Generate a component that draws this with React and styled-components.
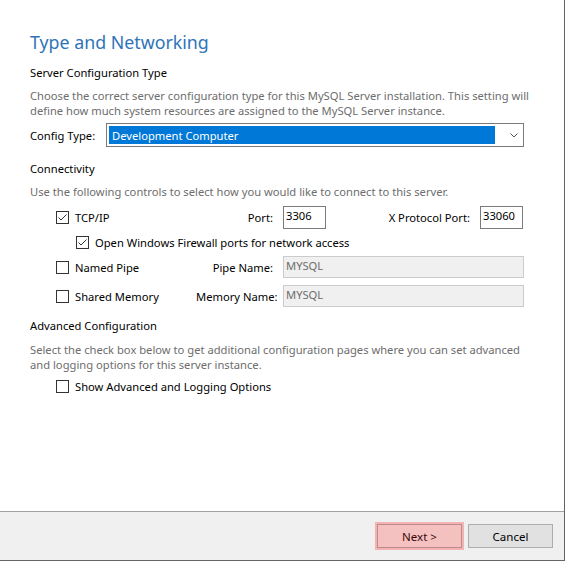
import React from "react";
import styled, { createGlobalStyle } from "styled-components";

const GlobalStyle = createGlobalStyle`
  html, body { margin: 0; padding: 0; background: #ffffff; }
  body { font-family: "Noto Sans", "Open Sans", sans-serif; font-size: 11.2px; color: #000; }
  * { box-sizing: border-box; }
`;

const Window = styled.div`
  width: 565px;
  height: 561px;
  display: flex;
  flex-direction: column;
  border-right: 1px solid #646464;
  background: #ffffff;
`;

const Content = styled.div`
  flex: 1;
  padding: 28px 40px 0 30px;
  display: flex;
  flex-direction: column;
`;

const Title = styled.h1`
  margin: 0;
  font-weight: 400;
  font-size: 17.8px;
  line-height: 28px;
  color: #2f74b8;
`;

const Heading = styled.div`
  margin-top: ${(p) => p.$mt}px;
  line-height: 16px;
  color: #000;
`;

const Description = styled.p`
  margin: ${(p) => p.$mt}px -20px 0 0;
  line-height: 15px;
  color: #6d6d6d;
  white-space: nowrap;
`;

const ConfigRow = styled.div`
  display: flex;
  align-items: center;
  margin-top: 5px;
  height: 24px;
`;

const ConfigLabel = styled.span`
  width: 76px;
`;

const Select = styled.div`
  flex: 1;
  height: 24px;
  border: 1px solid #7a7a7a;
  padding: 2px;
  display: flex;
  align-items: stretch;
  background: #fff;
`;

const SelectValue = styled.div`
  flex: 1;
  background: #0078d7;
  color: #ffffff;
  padding-left: 3px;
  display: flex;
  align-items: center;
  margin-right: 15px;
`;

const Chevron = styled.svg`
  width: 8px;
  height: 5px;
  align-self: center;
  margin-right: 3px;
`;

const OptionRow = styled.div`
  display: flex;
  align-items: center;
  height: ${(p) => p.$h}px;
  margin-top: ${(p) => p.$mt}px;
  padding-left: ${(p) => p.$indent}px;
`;

const CheckCell = styled.label`
  display: flex;
  align-items: center;
  gap: 6px;
  width: ${(p) => (p.$w ? `${p.$w}px` : "auto")};
  white-space: nowrap;
`;

const Box = styled.span`
  width: 13px;
  height: 13px;
  border: 1px solid #333333;
  background: #fff;
  display: inline-flex;
  align-items: center;
  justify-content: center;
  flex-shrink: 0;
`;

const FieldLabel = styled.span`
  width: ${(p) => p.$w}px;
  text-align: right;
  margin-right: 10px;
  white-space: nowrap;
`;

const TextInput = styled.div`
  width: ${(p) => (p.$w ? `${p.$w}px` : "auto")};
  flex: ${(p) => (p.$w ? "none" : "1")};
  height: ${(p) => p.$h}px;
  border: 1px solid ${(p) => (p.$disabled ? "#cccccc" : "#7a7a7a")};
  background: ${(p) => (p.$disabled ? "#f0f0f0" : "#ffffff")};
  color: ${(p) => (p.$disabled ? "#6d6d6d" : "#000")};
  padding: 1px 2px 0;
  line-height: 16px;
`;

const Footer = styled.div`
  height: 50px;
  border-top: 1px solid #a0a0a0;
  border-bottom: 1px solid #646464;
  background: #f0f0f0;
  display: flex;
  align-items: center;
  justify-content: flex-end;
  padding-right: 11px;
  gap: 6px;
`;

const Button = styled.button`
  width: 85px;
  height: 24px;
  font: inherit;
  font-size: 11.5px;
  color: ${(p) => (p.$focused ? "#3a0a0a" : "#000")};
  background: ${(p) => (p.$focused ? "#f4c0c0" : "#e1e1e1")};
  border: 1px solid ${(p) => (p.$focused ? "#c08a8a" : "#adadad")};
  box-shadow: ${(p) => (p.$focused ? "0 0 0 2px #f2b3b3" : "none")};
  padding: 0;
`;

const Check = ({ checked }) => (
  <Box>
    {checked && (
      <svg width="11" height="11" viewBox="0 0 11 11">
        <path d="M1.5 5.5 L4 8 L9.5 2.5" fill="none" stroke="#333" strokeWidth="1" />
      </svg>
    )}
  </Box>
);

export default function App() {
  return (
    <>
      <GlobalStyle />
      <Window>
        <Content>
          <Title>Type and Networking</Title>
          <Heading $mt={9}>Server Configuration Type</Heading>
          <Description $mt={7}>
            Choose the correct server configuration type for this MySQL Server installation. This setting will
            <br />
            define how much system resources are assigned to the MySQL Server instance.
          </Description>
          <ConfigRow>
            <ConfigLabel>Config Type:</ConfigLabel>
            <Select>
              <SelectValue>Development Computer</SelectValue>
              <Chevron viewBox="0 0 8 5">
                <path d="M0.5 0.5 L4 4 L7.5 0.5" fill="none" stroke="#555" strokeWidth="1" />
              </Chevron>
            </Select>
          </ConfigRow>
          <Heading $mt={14}>Connectivity</Heading>
          <Description $mt={7}>Use the following controls to select how you would like to connect to this server.</Description>
          <OptionRow $h={23} $mt={7} $indent={26}>
            <CheckCell $w={140}>
              <Check checked />
              TCP/IP
            </CheckCell>
            <FieldLabel $w={77}>Port:</FieldLabel>
            <TextInput $w={43} $h={23}>3306</TextInput>
            <FieldLabel $w={144}>X Protocol Port:</FieldLabel>
            <TextInput $w={43} $h={23}>33060</TextInput>
          </OptionRow>
          <OptionRow $h={18} $mt={4} $indent={46}>
            <CheckCell>
              <Check checked />
              Open Windows Firewall ports for network access
            </CheckCell>
          </OptionRow>
          <OptionRow $h={22} $mt={5} $indent={26}>
            <CheckCell $w={140}>
              <Check />
              Named Pipe
            </CheckCell>
            <FieldLabel $w={77}>Pipe Name:</FieldLabel>
            <TextInput $h={22} $disabled>MYSQL</TextInput>
          </OptionRow>
          <OptionRow $h={22} $mt={7} $indent={26}>
            <CheckCell $w={140}>
              <Check />
              Shared Memory
            </CheckCell>
            <FieldLabel $w={77}>Memory Name:</FieldLabel>
            <TextInput $h={22} $disabled>MYSQL</TextInput>
          </OptionRow>
          <Heading $mt={11}>Advanced Configuration</Heading>
          <Description $mt={8}>
            Select the check box below to get additional configuration pages where you can set advanced
            <br />
            and logging options for this server instance.
          </Description>
          <OptionRow $h={18} $mt={5} $indent={26}>
            <CheckCell>
              <Check />
              Show Advanced and Logging Options
            </CheckCell>
          </OptionRow>
        </Content>
        <Footer>
          <Button $focused>Next &gt;</Button>
          <Button>Cancel</Button>
        </Footer>
      </Window>
    </>
  );
}
